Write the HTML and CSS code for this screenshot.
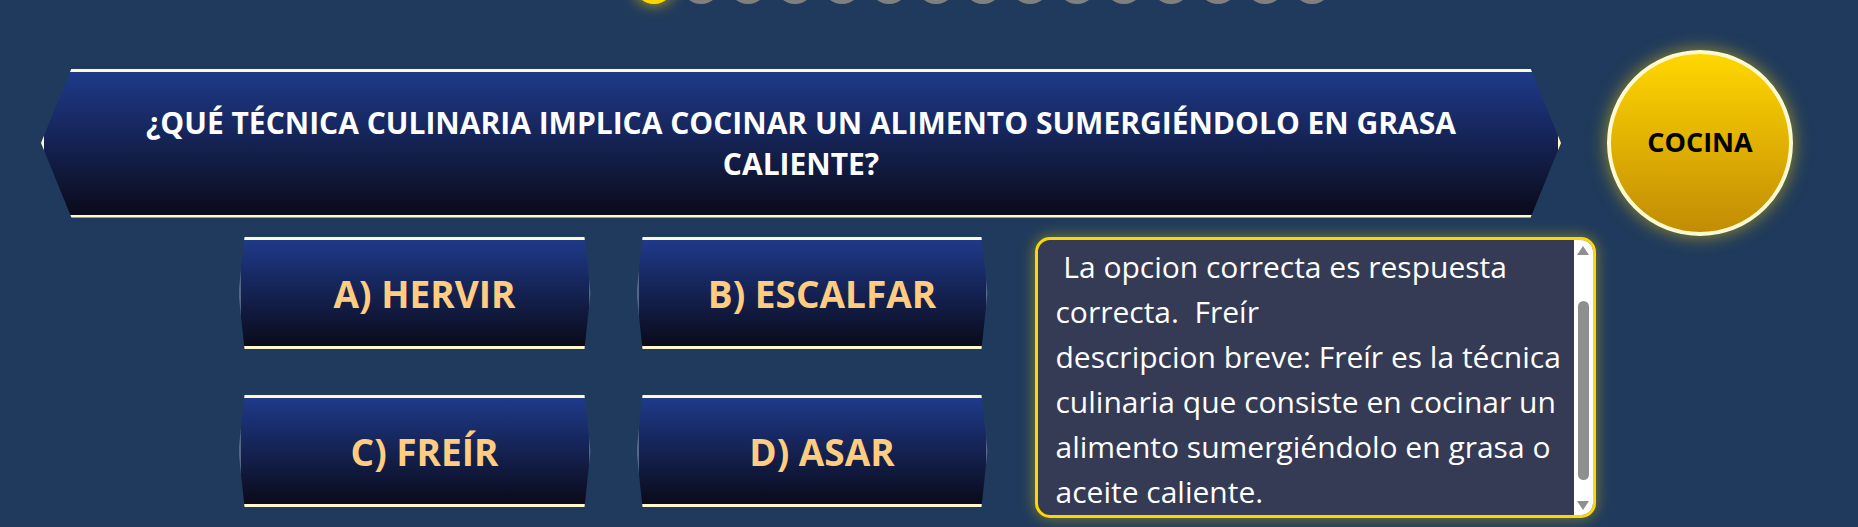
FILE: index.html
```html
<!DOCTYPE html>
<html lang="es">
<head>
<meta charset="utf-8">
<title>Trivia</title>
<link rel="stylesheet" href="styles.css">
</head>
<body>
<div class="progress">
  <span class="dot dot-active"></span>
  <span class="dot"></span>
  <span class="dot"></span>
  <span class="dot"></span>
  <span class="dot"></span>
  <span class="dot"></span>
  <span class="dot"></span>
  <span class="dot"></span>
  <span class="dot"></span>
  <span class="dot"></span>
  <span class="dot"></span>
  <span class="dot"></span>
  <span class="dot"></span>
  <span class="dot"></span>
  <span class="dot"></span>
</div>
<main class="game">
  <section class="question-row">
    <div class="question">
      <h1 class="question-text">¿QUÉ TÉCNICA CULINARIA IMPLICA COCINAR UN ALIMENTO SUMERGIÉNDOLO EN GRASA CALIENTE?</h1>
    </div>
    <div class="category">COCINA</div>
  </section>
  <section class="answer-row">
    <div class="answers">
      <div class="answer">A) HERVIR</div>
      <div class="answer">B) ESCALFAR</div>
      <div class="answer">C) FREÍR</div>
      <div class="answer">D) ASAR</div>
    </div>
    <div class="explain">
      <p class="explain-text"> La opcion correcta es respuesta correcta.  Freír&#10;descripcion breve: Freír es la técnica culinaria que consiste en cocinar un alimento sumergiéndolo en grasa o aceite caliente.</p>
      <div class="scrollbar" aria-hidden="true">
        <span class="sb-up"></span>
        <span class="sb-thumb"></span>
        <span class="sb-down"></span>
      </div>
    </div>
  </section>
</main>
</body>
</html>
```

FILE: styles.css
```css
* { box-sizing: border-box; }
html, body { margin: 0; }
body {
  background: #1f3a5c;
  font-family: "Open Sans", "Noto Sans", sans-serif;
  width: 1858px;
  height: 527px;
  overflow: hidden;
}
.progress {
  display: flex;
  justify-content: center;
  gap: 7px;
  margin-top: -36px;
  padding-left: 108px;
}
.dot {
  flex: none;
  width: 40px;
  height: 40px;
  border-radius: 50%;
  background: #808080;
}
.dot-active {
  background: #ffd700;
  box-shadow: 0 0 15px rgba(255, 215, 0, 0.7);
}
.game { padding-right: 24px; }
.question-row {
  display: flex;
  align-items: center;
  justify-content: center;
  gap: 46px;
  margin-top: 46px;
}
.question {
  flex: none;
  width: 1520px;
  height: 149px;
  display: flex;
  align-items: center;
  justify-content: center;
  padding: 0 80px;
  background: linear-gradient(to bottom, #1f3a8a, #0a0a1a);
  border: 3px solid #fffacd;
  clip-path: polygon(2% 0, 98% 0, 100% 50%, 98% 100%, 2% 100%, 0 50%);
}
.question-text {
  margin: 0;
  color: #fff;
  font-size: 30px;
  font-weight: 700;
  line-height: 41px;
  text-align: center;
}
.category {
  flex: none;
  width: 186px;
  height: 186px;
  border-radius: 50%;
  border: 4px solid #fffacd;
  background: linear-gradient(to bottom, #ffd700, #c28c05);
  display: flex;
  align-items: center;
  justify-content: center;
  padding-bottom: 4px;
  color: #000;
  font-size: 27px;
  font-weight: 700;
  box-shadow: 0 0 18px rgba(255, 215, 0, 0.55);
}
.answer-row {
  display: flex;
  justify-content: center;
  align-items: flex-start;
  gap: 47px;
  margin-top: 1px;
}
.answers {
  display: grid;
  grid-template-columns: 352px 351px;
  grid-auto-rows: 112px;
  column-gap: 46px;
  row-gap: 46px;
}
.answer {
  display: flex;
  align-items: center;
  justify-content: center;
  padding-left: 20px;
  background: linear-gradient(to bottom, #1f3a8a, #0a0a1a);
  border-top: 3px solid #fffacd;
  border-bottom: 3px solid #fffacd;
  border-left: 2px solid #56658a;
  border-right: 2px solid #56658a;
  clip-path: polygon(6px 0, calc(100% - 6px) 0, 100% 50%, calc(100% - 6px) 100%, 6px 100%, 0 50%);
  color: #ffcc80;
  font-size: 37px;
  font-weight: 700;
}
.explain {
  flex: none;
  display: flex;
  width: 561px;
  height: 281px;
  border: 3px solid #ffd700;
  border-radius: 15px;
  background: #353b55;
  box-shadow: 0 0 15px rgba(255, 215, 0, 0.45);
  overflow: hidden;
  color: #fff;
}
.explain-text {
  flex: 1;
  min-width: 0;
  margin: 0;
  padding: 4px 4px 0 18px;
  white-space: pre-wrap;
  font-size: 30px;
  line-height: 45px;
}
.scrollbar {
  flex: none;
  width: 19px;
  display: flex;
  flex-direction: column;
  align-items: center;
  padding: 6px 0 5px;
  background: #fff;
}
.sb-up {
  width: 0;
  height: 0;
  border-left: 6.5px solid transparent;
  border-right: 6.5px solid transparent;
  border-bottom: 9px solid #8f8f8f;
}
.sb-thumb {
  width: 11px;
  height: 179px;
  margin-top: 46px;
  border-radius: 6px;
  background: #8f8f8f;
}
.sb-down {
  width: 0;
  height: 0;
  margin-top: auto;
  border-left: 6.5px solid transparent;
  border-right: 6.5px solid transparent;
  border-top: 9px solid #8f8f8f;
}
```
